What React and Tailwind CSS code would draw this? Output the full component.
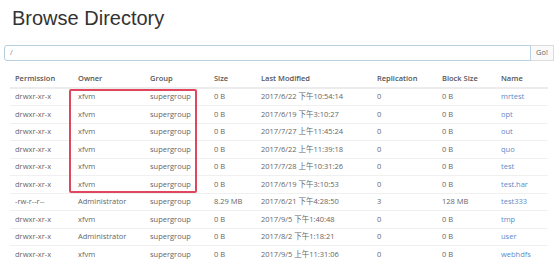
import React from 'react';

const rows = [
    ['drwxr-xr-x', 'xfvm', 'supergroup', '0 B', '2017/6/22 下午10:54:14', '0', '0 B', 'mrtest'],
    ['drwxr-xr-x', 'xfvm', 'supergroup', '0 B', '2017/6/19 下午3:10:27', '0', '0 B', 'opt'],
    ['drwxr-xr-x', 'xfvm', 'supergroup', '0 B', '2017/7/27 上午11:45:24', '0', '0 B', 'out'],
    ['drwxr-xr-x', 'xfvm', 'supergroup', '0 B', '2017/6/22 上午11:39:18', '0', '0 B', 'quo'],
    ['drwxr-xr-x', 'xfvm', 'supergroup', '0 B', '2017/7/28 上午10:31:26', '0', '0 B', 'test'],
    ['drwxr-xr-x', 'xfvm', 'supergroup', '0 B', '2017/6/19 下午3:10:53', '0', '0 B', 'test.har'],
    ['-rw-r--r--', 'Administrator', 'supergroup', '8.29 MB', '2017/6/21 下午4:28:50', '3', '128 MB', 'test333'],
    ['drwxr-xr-x', 'xfvm', 'supergroup', '0 B', '2017/9/5 下午1:40:48', '0', '0 B', 'tmp'],
    ['drwxr-xr-x', 'Administrator', 'supergroup', '0 B', '2017/8/2 下午1:18:21', '0', '0 B', 'user'],
    ['drwxr-xr-x', 'xfvm', 'supergroup', '0 B', '2017/9/5 上午11:31:06', '0', '0 B', 'webhdfs'],
];

const headers = ['Permission', 'Owner', 'Group', 'Size', 'Last Modified', 'Replication', 'Block Size', 'Name'];
const widths = ['w-[63px]', 'w-[72px]', 'w-[64px]', 'w-[47px]', 'w-[116px]', 'w-[65px]', 'w-[59px]', 'w-[52px]'];

export default function App() {
    return (
        <div className="w-[554px] h-[274px] bg-white overflow-hidden text-[#666]" style={{ fontFamily: '"Open Sans", "Noto Sans CJK SC", sans-serif' }}>
            <h1 className="pl-[12px] pt-[5px] h-[43px] text-[20px] leading-[26px] text-[#333] font-normal" style={{ fontFamily: '"Liberation Sans", Arial, sans-serif' }}>
                Browse Directory
            </h1>

            {/* path input + Go button */}
            <div className="flex pl-[4px] h-[16px] mt-[2px]">
                <div className="flex-1 border border-[#b8cfe0] rounded-l-[3px] bg-white flex items-center pl-[5px] text-[7.5px] text-[#888]">/</div>
                <div className="w-[23px] border border-l-0 border-[#ddd] bg-[#fafafa] flex items-center justify-center text-[7.5px] text-[#666]">Go!</div>
            </div>

            {/* listing */}
            <div className="relative mt-[10px] pl-[10px]">
                <table className="border-collapse text-[7.5px] leading-none table-fixed">
                    <thead>
                        <tr className="h-[17px] border-b-2 border-[#ececec]">
                            {headers.map((h, i) => (
                                <th key={h} className={`${widths[i]} px-[5px] text-left font-semibold text-[#555]`}>{h}</th>
                            ))}
                        </tr>
                    </thead>
                    <tbody>
                        {rows.map((r, ri) => (
                            <tr key={ri} className="h-[17.5px] border-t border-[#f0f0f0]">
                                {r.map((c, ci) => (
                                    <td key={ci} className={`px-[5px] whitespace-nowrap ${ci === 7 ? 'text-[#5b8bc9]' : ''}`}>{c}</td>
                                ))}
                            </tr>
                        ))}
                    </tbody>
                </table>

                {/* annotation box over Owner/Group of the first six rows */}
                <div className="absolute left-[69px] top-[18px] w-[128px] h-[104px] border-2 border-[#e0465e] rounded-[2px] pointer-events-none"></div>
            </div>
        </div>
    );
}
